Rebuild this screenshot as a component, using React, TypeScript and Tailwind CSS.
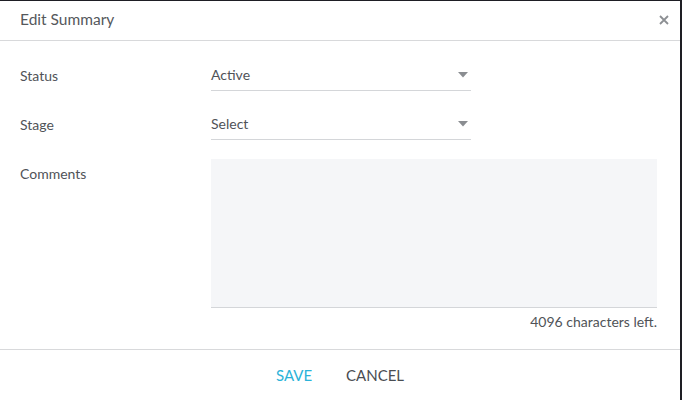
import React from "react";

function Caret() {
  return (
    <svg width="10" height="6" viewBox="0 0 10 6" className="shrink-0">
      <path d="M0 0 L10 0 L5 5.5 Z" fill="#8a8d91" />
    </svg>
  );
}

function SelectField({ value }: { value: string }) {
  return (
    <div className="w-[260px] h-[32px] flex items-center justify-between border-b border-[#d4d6d9] pr-[3px]">
      <span className="text-[14px] text-[#505358]">{value}</span>
      <Caret />
    </div>
  );
}

export default function App() {
  return (
    <div
      className="w-[682px] h-[400px] bg-[#1e1e24] pt-[1px] pr-[2px] overflow-hidden"
      style={{ fontFamily: "Lato, 'Open Sans', sans-serif" }}
    >
      <div className="w-[680px] h-[399px] bg-white flex flex-col">
        <div className="h-[40px] flex items-center justify-between pl-[20px] pr-[11px] border-b border-[#d8d9db] shrink-0">
          <span className="text-[15.5px] text-[#55585c] mt-[-2px]">Edit Summary</span>
          <svg width="10" height="10" viewBox="0 0 10 10" className="mt-[-2px]">
            <path d="M1 1 L9 9 M9 1 L1 9" stroke="#8c8f93" strokeWidth="1.8" />
          </svg>
        </div>
        <div className="flex-1 pl-[20px] pt-[18px]">
          <div className="flex items-center h-[32px]">
            <div className="w-[191px] text-[14px] text-[#505358] pt-[1px]">Status</div>
            <SelectField value="Active" />
          </div>
          <div className="flex items-center h-[32px] mt-[17px]">
            <div className="w-[191px] text-[14px] text-[#505358] pt-[1px]">Stage</div>
            <SelectField value="Select" />
          </div>
          <div className="flex mt-[19px]">
            <div className="w-[191px] text-[14px] text-[#505358] pt-[4px]">Comments</div>
            <div className="flex flex-col w-[446px]">
              <div className="h-[149px] bg-[#f5f6f8] border-b border-[#d4d6d9]" />
              <div className="text-right text-[14px] text-[#505358] mt-[3px]">4096 characters left.</div>
            </div>
          </div>
        </div>
        <div className="h-[51px] border-t border-[#d8d9db] flex items-center justify-center gap-[34px] shrink-0">
          <span className="text-[15px] text-[#2bb3d9]">SAVE</span>
          <span className="text-[15px] text-[#4a4d52]">CANCEL</span>
        </div>
      </div>
    </div>
  );
}
